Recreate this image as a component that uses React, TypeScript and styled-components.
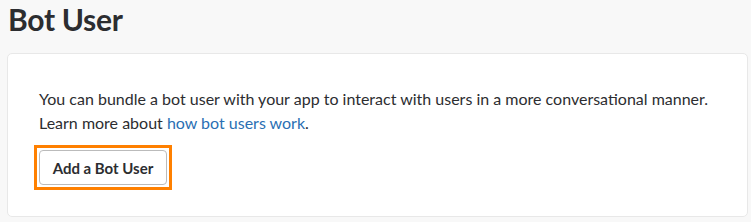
import React from "react";
import styled, { createGlobalStyle } from "styled-components";

const Global = createGlobalStyle`
  html, body { margin: 0; padding: 0; background: #f8f8f8; }
  body { font-family: Lato, "Noto Sans", sans-serif; color: #2c2d30; -webkit-font-smoothing: antialiased; }
`;

const Page = styled.div`
  padding: 0 3px 0 7px;
`;

const Title = styled.h1`
  margin: 0;
  padding: 0 0 0 1px;
  font-size: 30px;
  line-height: 38px;
  font-weight: 700;
  color: #2c2d30;
  letter-spacing: -0.3px;
`;

const Card = styled.section`
  margin-top: 15px;
  height: 164px;
  box-sizing: border-box;
  background: #fff;
  border: 1px solid #e8e8e8;
  border-radius: 5px;
  padding: 33px 26px 0;
`;

const Text = styled.p`
  margin: 0 0 0 5px;
  font-size: 16px;
  line-height: 24px;
  color: #2c2d30;
`;

const Link = styled.a`
  color: #2a6fb3;
  text-decoration: none;
`;

const FocusRing = styled.span`
  display: inline-block;
  margin-top: 10px;
  border: 3px solid #ff8000;
  padding: 2px;
`;

const Button = styled.button`
  display: block;
  height: 35px;
  width: 128px;
  padding: 0;
  background: #fff;
  border: 1px solid #bbbbbb;
  border-radius: 4px;
  font-family: Lato, "Noto Sans", sans-serif;
  font-size: 15px;
  font-weight: 700;
  color: #2c2d30;
  cursor: pointer;
  outline: none;
`;

export default function App() {
  return (
    <>
      <Global />
      <Page>
        <Title>Bot User</Title>
        <Card>
          <Text>
            You can bundle a bot user with your app to interact with users in a more conversational manner.
            <br />
            Learn more about <Link href="#">how bot users work</Link>.
          </Text>
          <FocusRing>
            <Button>Add a Bot User</Button>
          </FocusRing>
        </Card>
      </Page>
    </>
  );
}
